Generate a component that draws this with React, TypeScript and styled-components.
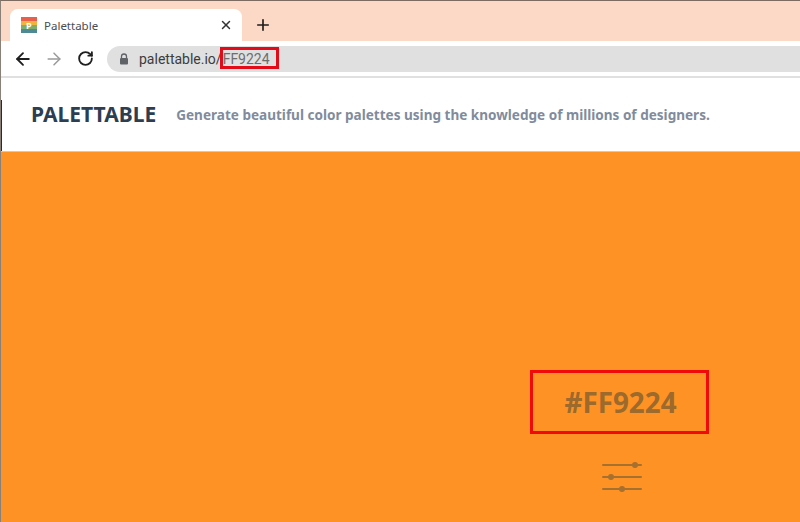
import React from 'react';
import styled, { createGlobalStyle } from 'styled-components';
import { ArrowLeft, ArrowRight, RotateCw, X, Plus } from 'lucide-react';

const GlobalStyle = createGlobalStyle`
  html, body {
    margin: 0;
    padding: 0;
    background: #fff;
  }
  body {
    font-family: "Noto Sans", sans-serif;
  }
`;

const Page = styled.div`
  width: 800px;
  height: 522px;
  overflow: hidden;
  display: flex;
  flex-direction: column;
  box-sizing: border-box;
  border-top: 1px solid #7d6a60;
  border-left: 1px solid #8a8078;
`;

const TabStrip = styled.div`
  height: 40px;
  flex: none;
  background: #fcd9c6;
  display: flex;
  align-items: flex-end;
  padding-left: 9px;
`;

const Tab = styled.div`
  width: 232px;
  height: 32px;
  background: #fff;
  border-radius: 8px 8px 0 0;
  display: flex;
  align-items: center;
  box-sizing: border-box;
  padding: 0 9px 0 11px;
`;

const Favicon = styled.svg`
  width: 16px;
  height: 16px;
  flex: none;
`;

const FaviconLetter = styled.text`
  font-family: "Noto Sans", sans-serif;
  font-size: 9px;
  font-weight: 700;
  fill: #fff;
`;

const TabTitle = styled.span`
  margin-left: 7px;
  font-size: 11.5px;
  color: #4a4d51;
  flex: 1;
`;

const TabAdd = styled.div`
  width: 28px;
  height: 32px;
  margin-left: 7px;
  display: flex;
  align-items: center;
  justify-content: center;
  color: #1c1c1c;
`;

const Toolbar = styled.div`
  height: 35px;
  flex: none;
  background: #fff;
  display: flex;
  align-items: center;
  padding-left: 12px;
  gap: 11px;
  border-bottom: 2px solid #e0e0e0;
`;

const NavIcon = styled.div<{ $muted?: boolean }>`
  width: 20px;
  height: 20px;
  display: flex;
  align-items: center;
  justify-content: center;
  color: ${p => (p.$muted ? '#9a9a9a' : '#1f1f1f')};
`;

const AddressBar = styled.div`
  flex: 1;
  height: 26px;
  margin-left: 1px;
  background: #e0e0e0;
  border-radius: 13px 0 0 13px;
  display: flex;
  align-items: center;
  padding-left: 11px;
  font-family: "Roboto", sans-serif;
  font-size: 14px;
`;

const LockIcon = styled.svg`
  width: 12px;
  height: 12px;
  flex: none;
`;

const Host = styled.span`
  margin-left: 9px;
  color: #3c3c3c;
`;

const PathMark = styled.span`
  position: relative;
  color: #6e6e6e;
  margin-left: 1px;

  &::after {
    content: '';
    position: absolute;
    left: -3px;
    right: -9px;
    top: -4px;
    bottom: -2px;
    border: 3px solid #e30b17;
  }
`;

const SiteHeader = styled.header`
  height: 73px;
  flex: none;
  position: relative;
  background: #fff;
  display: flex;
  align-items: center;
  padding-left: 30px;
  border-bottom: 1px solid #d8c9b5;

  &::before {
    content: '';
    position: absolute;
    left: -1px;
    top: 22px;
    bottom: 0;
    width: 2px;
    background: #2a2a2a;
  }
`;

const Brand = styled.h1`
  margin: -2px 0 0;
  font-family: "Noto Sans", sans-serif;
  font-size: 21px;
  font-weight: 700;
  color: #2c3e50;
`;

const Tagline = styled.p`
  margin: 0 0 0 20px;
  font-family: "Noto Sans", sans-serif;
  font-size: 13.55px;
  font-weight: 700;
  color: #7f8c9d;
`;

const Swatch = styled.main`
  flex: 1;
  background: #ff9224;
  display: flex;
  flex-direction: column;
  align-items: flex-end;
  padding: 218px 91px 0 0;
`;

const CodeBox = styled.div`
  width: 179px;
  height: 64px;
  box-sizing: border-box;
  border: 3px solid #f00a0a;
  padding: 0 0 1px 2px;
  display: flex;
  align-items: center;
  justify-content: center;
  font-family: "Noto Sans", sans-serif;
  font-size: 27.8px;
  font-weight: 700;
  color: #9b6a2c;
`;

const SlidersIcon = styled.svg`
  width: 40px;
  height: 32px;
  margin: 27px 67px 0 0;
  display: block;
`;

export default function App() {
  return (
    <>
      <GlobalStyle />
      <Page>
        <TabStrip>
          <Tab>
            <Favicon viewBox="0 0 16 16">
              <rect width="16" height="4" fill="#e8604c" />
              <rect y="4" width="16" height="4" fill="#f2b33d" />
              <rect y="8" width="16" height="4" fill="#7fae6a" />
              <rect y="12" width="16" height="4" fill="#4f8a94" />
              <FaviconLetter x="5" y="11.5">P</FaviconLetter>
            </Favicon>
            <TabTitle>Palettable</TabTitle>
            <X size={14} strokeWidth={2.5} color="#333" />
          </Tab>
          <TabAdd>
            <Plus size={18} strokeWidth={2.2} />
          </TabAdd>
        </TabStrip>
        <Toolbar>
          <NavIcon><ArrowLeft size={20} strokeWidth={2.2} /></NavIcon>
          <NavIcon $muted><ArrowRight size={20} strokeWidth={1.8} /></NavIcon>
          <NavIcon><RotateCw size={17} strokeWidth={2.6} /></NavIcon>
          <AddressBar>
            <LockIcon viewBox="0 0 12 12">
              <path d="M3.5 5V3.5a2.5 2.5 0 0 1 5 0V5" fill="none" stroke="#5f6368" strokeWidth="1.3" />
              <rect x="2" y="5" width="8" height="6.5" rx="1" fill="#5f6368" />
            </LockIcon>
            <Host>palettable.io/</Host>
            <PathMark>FF9224</PathMark>
          </AddressBar>
        </Toolbar>
        <SiteHeader>
          <Brand>PALETTABLE</Brand>
          <Tagline>Generate beautiful color palettes using the knowledge of millions of designers.</Tagline>
        </SiteHeader>
        <Swatch>
          <CodeBox>#FF9224</CodeBox>
          <SlidersIcon viewBox="0 0 40 32" fill="none" stroke="#a6702f" strokeWidth="2" strokeLinecap="round">
            <path d="M1 4h38M1 16h38M1 28h38" />
            <circle cx="33" cy="4" r="3" fill="#a6702f" stroke="none" />
            <circle cx="9" cy="16" r="3" fill="#a6702f" stroke="none" />
            <circle cx="20" cy="28" r="3" fill="#a6702f" stroke="none" />
          </SlidersIcon>
        </Swatch>
      </Page>
    </>
  );
}
